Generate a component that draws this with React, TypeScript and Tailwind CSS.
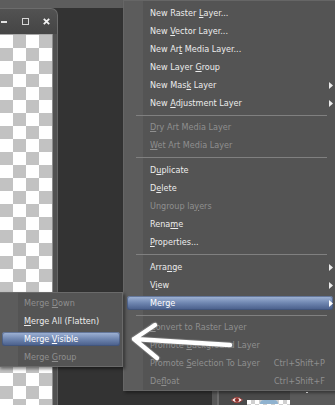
import clsx from 'clsx';

type Row =
  | { sep: 6 | 7 }
  | { t: [string, string, string]; off?: boolean; sub?: boolean; hot?: boolean; keys?: string };

const layerMenu: Row[] = [
  { t: ['New Raster ', 'L', 'ayer...'] },
  { t: ['New ', 'V', 'ector Layer...'] },
  { t: ['New Ar', 't', ' Media Layer...'] },
  { t: ['New Layer ', 'G', 'roup'] },
  { t: ['New Mas', 'k', ' Layer'], sub: true },
  { t: ['New ', 'A', 'djustment Layer'], sub: true },
  { sep: 6 },
  { t: ['', 'D', 'ry Art Media Layer'], off: true },
  { t: ['', 'W', 'et Art Media Layer'], off: true },
  { sep: 7 },
  { t: ['D', 'u', 'plicate'] },
  { t: ['D', 'e', 'lete'] },
  { t: ['Ungroup la', 'y', 'ers'], off: true },
  { t: ['Rena', 'm', 'e'] },
  { t: ['', 'P', 'roperties...'] },
  { sep: 7 },
  { t: ['Arra', 'n', 'ge'], sub: true },
  { t: ['V', 'i', 'ew'], sub: true },
  { t: ['Mer', 'g', 'e'], sub: true, hot: true },
  { sep: 6 },
  { t: ['', 'C', 'onvert to Raster Layer'], off: true },
  { t: ['Promote ', 'B', 'ackground Layer'], off: true },
  { t: ['Promote ', 'S', 'election To Layer'], off: true, keys: 'Ctrl+Shift+P' },
  { t: ['De', 'f', 'loat'], off: true, keys: 'Ctrl+Shift+F' },
];

const mergeMenu: Row[] = [
  { t: ['Merge ', 'D', 'own'], off: true },
  { t: ['', 'M', 'erge All (Flatten)'] },
  { t: ['Merge ', 'V', 'isible'], hot: true },
  { t: ['Merge ', 'G', 'roup'], off: true },
];

const checker =
  'bg-[image:conic-gradient(#c2c2c2_25%,#ffffff_0_50%,#c2c2c2_0_75%,#ffffff_0)] bg-[length:26px_26px]';

function Caret() {
  return (
    <svg width="4" height="7" viewBox="0 0 4 7" className="shrink-0">
      <path d="M0 0 L4 3.5 L0 7 Z" fill="currentColor" />
    </svg>
  );
}

function MenuRows({ rows, textPad }: { rows: Row[]; textPad: string }) {
  return (
    <>
      {rows.map((r, i) =>
        'sep' in r ? (
          <div
            key={i}
            className={clsx('flex items-center pl-[12px] pr-[8px]', r.sep === 6 ? 'h-[6px]' : 'h-[7px]')}
          >
            <div className="h-px flex-1 bg-[#808080]" />
          </div>
        ) : (
          <div key={i} className="h-[18px] py-[2px] pl-[3px] pr-[2px]">
            <div
              className={clsx(
                'flex h-full items-center whitespace-nowrap rounded-[3px] leading-none',
                textPad,
                r.hot
                  ? 'bg-linear-to-b from-[#a4b7d8] via-[#6f86b0] to-[#475c88] text-white shadow-[inset_0_0_0_1px_rgba(60,78,115,0.6)]'
                  : r.off
                    ? 'text-[#8f8f8f]'
                    : 'text-[#ececec]',
              )}
            >
              <span>
                {r.t[0]}
                <span className="underline underline-offset-[1px]">{r.t[1]}</span>
                {r.t[2]}
              </span>
              <span className="flex-1" />
              {r.keys && <span className="mr-[8px]">{r.keys}</span>}
              {r.sub && <Caret />}
            </div>
          </div>
        ),
      )}
    </>
  );
}

function DocWindow() {
  return (
    <div className="flex w-[58px] flex-col">
      <div className="flex h-[26px] items-center rounded-tr-[7px] border-r border-t border-[#6c6c6c] bg-linear-to-b from-[#525252] to-[#454545]">
        <div className="ml-[1px] h-[2px] w-[6px] bg-[#e2e2e2]" />
        <div className="ml-[15px] h-[7px] w-[7px] border border-[#d6d6d6]" />
        <svg width="7" height="7" viewBox="0 0 7 7" className="ml-[14px]">
          <path d="M0.8 0.8 L6.2 6.2 M6.2 0.8 L0.8 6.2" stroke="#f2f2f2" strokeWidth="1.8" />
        </svg>
      </div>
      <div className="flex flex-1">
        <div className={clsx('w-[52px] border-t border-[#a9a9a9]', checker)} />
        <div className="w-[6px] border-l border-r border-l-[#8c8c8c] border-r-[#666666] bg-[#515151]" />
      </div>
    </div>
  );
}

function LayerPanel() {
  return (
    <div className="flex h-[16px] w-[123px] self-end bg-[#4a4a4a]">
      <div className="w-[5px] bg-[#575757]" />
      <div className="w-[2px] bg-[#6c6c6c]" />
      <div className="flex items-end pb-[1px] pl-[12px] pr-[4px]">
        <svg width="12" height="8" viewBox="0 0 12 8">
          <path d="M0.5 4 Q6 -1.5 11.5 4 Q6 9.5 0.5 4 Z" fill="#efe4e2" stroke="#9b3f3a" strokeWidth="1" />
          <circle cx="6" cy="4" r="2.1" fill="#8b2c28" />
        </svg>
      </div>
      <div className="flex w-[43px] items-end">
        <div className="flex h-[5px] w-full justify-center bg-[image:conic-gradient(#cfcfcf_25%,#ffffff_0_50%,#cfcfcf_0_75%,#ffffff_0)] bg-[length:8px_8px]">
          <div className="h-[4px] w-[18px] rounded-t-full bg-[#8fb2cf]" />
        </div>
      </div>
      <div className="flex-1 bg-[#5a5a5a]">
        <div className="ml-[16px] mt-[3px] h-px w-[2px] bg-white" />
      </div>
    </div>
  );
}

export default function App() {
  return (
    <div className="relative h-[405px] w-[335px] overflow-hidden bg-[#333333] font-['DejaVu_Sans_Condensed','Liberation_Sans',sans-serif] text-[9px]">
      <div className="flex h-full flex-col">
        <div className="h-[8px] bg-[#5d5d5d]" />
        <div className="flex flex-1">
          <DocWindow />
          <div className="flex flex-1 flex-col justify-end">
            <LayerPanel />
          </div>
        </div>
      </div>

      {/* layer context menu */}
      <div className="absolute left-[123px] top-0 w-[212px] border-b border-l border-t border-[#666666] bg-[linear-gradient(to_right,#5c5c5c_19px,#545454_19px)] pt-[3px] shadow-[2px_2px_3px_rgba(0,0,0,0.4)]">
        <MenuRows rows={layerMenu} textPad="pl-[23px]" />
      </div>

      {/* merge submenu */}
      <div className="absolute left-[-2px] top-[292px] w-[125px] border border-[#6a6a6a] bg-[linear-gradient(to_right,#5c5c5c_19px,#545454_19px)] pt-px shadow-[2px_2px_3px_rgba(0,0,0,0.45)]">
        <MenuRows rows={mergeMenu} textPad="pl-[22px]" />
      </div>

      {/* annotation arrow */}
      <svg className="pointer-events-none absolute inset-0" width="335" height="405" viewBox="0 0 335 405">
        <g fill="none" strokeLinecap="round" strokeLinejoin="round">
          <path d="M230 345 L134 339 M155 325 L134 339 L157 358" stroke="#8a8a8a" strokeWidth="6.5" opacity="0.5" />
          <path d="M230 345 L134 339 M155 325 L134 339 L157 358" stroke="#ffffff" strokeWidth="4.5" />
        </g>
      </svg>
    </div>
  );
}
